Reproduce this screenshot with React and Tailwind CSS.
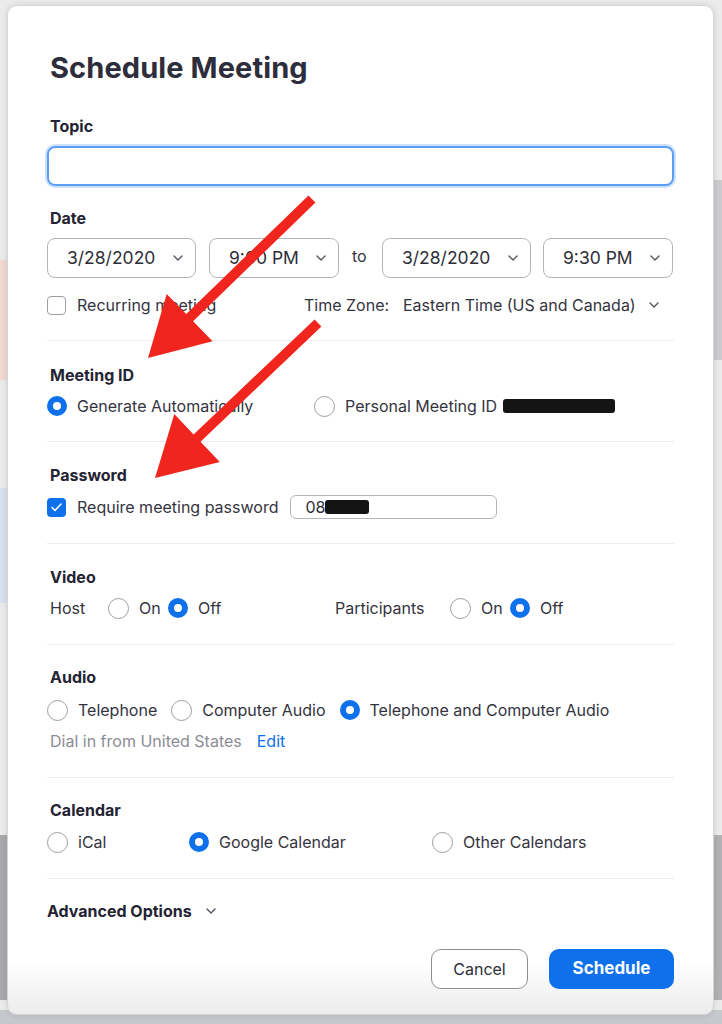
import React from 'react';

const font = { fontFamily: 'Inter, "Noto Sans", sans-serif' };

// builds a 7-point arrow polygon from the tail (sx, sy) to the tip (tx, ty)
function arrowPoints(sx, sy, tx, ty, shaft = 10, headL = 58, headW = 66) {
  const dx = tx - sx;
  const dy = ty - sy;
  const len = Math.hypot(dx, dy);
  const ux = dx / len;
  const uy = dy / len;
  const nx = -uy;
  const ny = ux;
  const bx = tx - ux * headL;
  const by = ty - uy * headL;
  const pts = [
    [sx + nx * shaft / 2, sy + ny * shaft / 2],
    [bx + nx * shaft / 2, by + ny * shaft / 2],
    [bx + nx * headW / 2, by + ny * headW / 2],
    [tx, ty],
    [bx - nx * headW / 2, by - ny * headW / 2],
    [bx - nx * shaft / 2, by - ny * shaft / 2],
    [sx - nx * shaft / 2, sy - ny * shaft / 2],
  ];
  return pts.map((p) => p[0].toFixed(1) + ',' + p[1].toFixed(1)).join(' ');
}

function Chevron({ className = '' }) {
  return (
    <svg width="10" height="6" viewBox="0 0 10 6" className={className}>
      <polyline points="1,1 5,5 9,1" fill="none" stroke="#55555f" strokeWidth="1.4" strokeLinecap="round" strokeLinejoin="round" />
    </svg>
  );
}

function Radio({ on }) {
  if (on) {
    return <span className="w-5 h-5 shrink-0 rounded-full border-[6px] border-[#0e71eb] bg-white" />;
  }
  return <span className="w-[21px] h-[21px] shrink-0 rounded-full border border-[#9d9da6] bg-white" />;
}

function Check({ on }) {
  if (on) {
    return (
      <span className="w-[19px] h-[19px] shrink-0 rounded-[4px] bg-[#0e71eb] flex items-center justify-center">
        <svg width="11" height="9" viewBox="0 0 11 9">
          <polyline points="1,4.5 4,7.5 10,1" fill="none" stroke="#fff" strokeWidth="1.5" strokeLinecap="round" strokeLinejoin="round" />
        </svg>
      </span>
    );
  }
  return <span className="w-[19px] h-[19px] shrink-0 rounded-[4px] border border-[#9d9da6] bg-white" />;
}

function Option({ on, children, className = '' }) {
  return (
    <div className={'flex items-center gap-[10px] ' + className}>
      <Radio on={on} />
      <span>{children}</span>
    </div>
  );
}

function Select({ value, wide }) {
  return (
    <div className={'h-10 rounded-[8px] border border-[#b4b4bc] flex items-center justify-between pl-[19px] pr-[12px] text-[17.5px] text-[#2e2e38] ' + (wide ? 'w-[149px]' : 'w-[130px]')}>
      <span>{value}</span>
      <Chevron />
    </div>
  );
}

function Label({ children, className = '' }) {
  return <div className={'h-5 leading-5 pl-[3px] text-[16px] font-bold text-[#232333] ' + className}>{children}</div>;
}

function Divider({ className = '' }) {
  return <div className={'h-px bg-[#ececf0] ' + className} />;
}

function Redacted({ w }) {
  return <span className={'inline-block h-[14px] rounded-[3px] bg-[#141414] ' + w} />;
}

export default function App() {
  return (
    <div style={font} className="relative w-[722px] h-[1024px] overflow-hidden bg-[#ebebeb]">
      {/* desktop behind the dialog */}
      <div className="absolute left-0 top-[260px] w-[14px] h-[120px] bg-[#f2d9d2]" />
      <div className="absolute left-0 top-[488px] w-[14px] h-[115px] bg-[#d9e1ef]" />
      <div className="absolute left-0 top-[835px] w-[14px] h-[165px] bg-[#a9a9ab]" />
      <div className="absolute right-0 top-[180px] w-[14px] h-[180px] bg-[#cbcbce]" />
      <div className="absolute right-0 top-[835px] w-[14px] h-[165px] bg-[#b2b2b4]" />
      <div className="absolute left-0 bottom-0 w-full h-[14px] bg-[#c5c8cd]" />

      <div className="relative ml-[7px] mt-[5px] w-[707px] h-[1010px] rounded-[10px] border border-[#d6d6d8] bg-gradient-to-b from-white from-[95%] to-[#ececec] shadow-[0_0_6px_rgba(0,0,0,0.12)] px-[39px] pt-[45px] text-[16px] text-[#34343f]">
        <h1 className="h-[34px] leading-[34px] pl-[3px] text-[29px] font-bold text-[#2d2d3b] tracking-[0.1px]">Schedule Meeting</h1>

        <Label className="mt-[31px]">Topic</Label>
        <div className="mt-[10px] h-10 rounded-[8px] border-2 border-[#5c9df5] shadow-[0_0_0_2px_rgba(92,157,245,0.3)]" />

        <Label className="mt-[22px]">Date</Label>
        <div className="mt-[10px] flex items-center">
          <Select value="3/28/2020" wide />
          <div className="ml-[13px]"><Select value="9:00 PM" /></div>
          <span className="ml-[13px] w-[30px] text-[16px] text-[#34343f] -mt-[4px]">to</span>
          <Select value="3/28/2020" wide />
          <div className="ml-[12px]"><Select value="9:30 PM" /></div>
        </div>

        <div className="mt-[15px] h-6 flex items-center">
          <div className="w-[257px] flex items-center gap-[11px]">
            <Check />
            <span>Recurring meeting</span>
          </div>
          <span className="w-[99px]">Time Zone:</span>
          <span>Eastern Time (US and Canada)</span>
          <Chevron className="ml-[13px]" />
        </div>

        <Divider className="mt-[23px]" />

        <Label className="mt-[24px]">Meeting ID</Label>
        <div className="mt-[9px] h-6 flex items-center">
          <Option on className="w-[267px]">Generate Automatically</Option>
          <Option>
            <span className="flex items-center gap-[6px]">Personal Meeting ID <Redacted w="w-[112px]" /></span>
          </Option>
        </div>

        <Divider className="mt-[23px]" />

        <Label className="mt-[23px]">Password</Label>
        <div className="mt-[10px] h-6 flex items-center">
          <div className="flex items-center gap-[11px]">
            <Check on />
            <span>Require meeting password</span>
          </div>
          <div className="ml-[12px] w-[207px] h-[24px] rounded-[6px] border border-[#b4b4bc] flex items-center pl-[14px] text-[#2e2e38]">
            08<Redacted w="w-[44px]" />
          </div>
        </div>

        <Divider className="mt-[24px]" />

        <Label className="mt-[23px]">Video</Label>
        <div className="mt-[9px] h-6 flex items-center">
          <div className="w-[288px] flex items-center">
            <span className="w-[61px] pl-[3px]">Host</span>
            <Option className="w-[60px]">On</Option>
            <Option on>Off</Option>
          </div>
          <span className="w-[115px]">Participants</span>
          <Option className="w-[60px]">On</Option>
          <Option on>Off</Option>
        </div>

        <Divider className="mt-[24px]" />

        <Label className="mt-[22px]">Audio</Label>
        <div className="mt-[11px] h-6 flex items-center gap-[14px]">
          <Option>Telephone</Option>
          <Option>Computer Audio</Option>
          <Option on>Telephone and Computer Audio</Option>
        </div>
        <div className="mt-[9px] h-5 leading-5 pl-[3px] text-[#8c8c96]">
          Dial in from United States<span className="ml-[15px] text-[#0e71eb]">Edit</span>
        </div>

        <Divider className="mt-[26px]" />

        <Label className="mt-[22px]">Calendar</Label>
        <div className="mt-[10px] h-6 flex items-center">
          <Option className="w-[142px]">iCal</Option>
          <Option on className="w-[243px]">Google Calendar</Option>
          <Option>Other Calendars</Option>
        </div>

        <Divider className="mt-[24px]" />

        <div className="mt-[22px] h-5 flex items-center gap-[14px] text-[16px] font-bold text-[#232333]">
          <span>Advanced Options</span>
          <Chevron />
        </div>

        <div className="mt-[28px] flex justify-end gap-[21px]">
          <button className="w-[97px] h-10 rounded-[10px] border border-[#8e8e97] bg-white text-[16px] text-[#2d2d3b]">Cancel</button>
          <button className="w-[125px] h-10 rounded-[10px] bg-[#0e71eb] text-[17px] font-bold text-white">Schedule</button>
        </div>
      </div>

      {/* red annotation arrows */}
      <svg className="absolute inset-0 pointer-events-none" width="722" height="1024">
        <polygon points={arrowPoints(312, 199, 148, 358)} fill="#f0261e" />
        <polygon points={arrowPoints(318, 323, 155, 478)} fill="#f0261e" />
      </svg>
    </div>
  );
}
